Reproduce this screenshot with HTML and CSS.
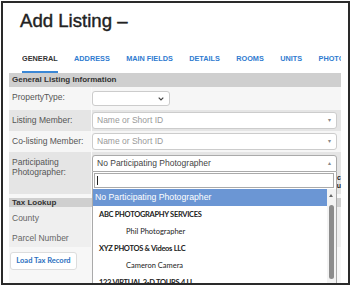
FILE: index.html
```html
<!DOCTYPE html>
<html lang="en">
<head>
    <meta charset="UTF-8">
    <meta name="viewport" content="width=device-width, initial-scale=1.0">
    <title>Add Listing</title>
    <link rel="stylesheet" href="styles.css">
</head>
<body>
    <div class="frame">
        <h1 class="title">Add Listing &ndash;</h1>

        <nav class="tabs">
            <a class="tab active">GENERAL</a>
            <a class="tab">ADDRESS</a>
            <a class="tab">MAIN FIELDS</a>
            <a class="tab">DETAILS</a>
            <a class="tab">ROOMS</a>
            <a class="tab">UNITS</a>
            <a class="tab">PHOTOS</a>
        </nav>

        <div class="panel">
            <div class="section-head">General Listing Information</div>

            <div class="row light first">
                <div class="label">PropertyType:</div>
                <div class="field">
                    <div class="select short">
                        <svg class="chevron" width="6" height="4" viewBox="0 0 6 4"><path d="M0.7 0.7 L3 3 L5.3 0.7" fill="none" stroke="#444" stroke-width="1.2"/></svg>
                    </div>
                </div>
            </div>

            <div class="row gray">
                <div class="label">Listing Member:</div>
                <div class="field">
                    <div class="select"><span class="placeholder">Name or Short ID</span><span class="arrow">&#9662;</span></div>
                </div>
            </div>

            <div class="row light">
                <div class="label">Co-listing Member:</div>
                <div class="field">
                    <div class="select"><span class="placeholder">Name or Short ID</span><span class="arrow">&#9662;</span></div>
                </div>
            </div>

            <div class="row gray tall">
                <div class="label">Participating<br>Photographer:</div>
                <div class="field">
                    <div class="combo">
                        <div class="select open"><span class="value">No Participating Photographer</span><span class="arrow">&#9652;</span></div>
                        <div class="dropdown">
                            <div class="search"><span class="cursor"></span></div>
                            <div class="results">
                                <ul class="options">
                                    <li class="option highlighted">No Participating Photographer</li>
                                    <li class="option group">ABC PHOTOGRAPHY SERVICES</li>
                                    <li class="option child">Phil Photographer</li>
                                    <li class="option group">XYZ PHOTOS &amp; Videos LLC</li>
                                    <li class="option child">Cameron Camera</li>
                                    <li class="option group">123 VIRTUAL 3-D TOURS 4 U</li>
                                </ul>
                                <div class="scrollbar">
                                    <span class="scroll-up"></span>
                                    <span class="thumb"></span>
                                </div>
                            </div>
                        </div>
                    </div>
                    <div class="peek">c<br>u</div>
                </div>
            </div>

            <div class="section-head tax">Tax Lookup</div>
            <div class="row soft">
                <div class="label">County</div>
                <div class="field"></div>
            </div>
            <div class="row soft">
                <div class="label">Parcel Number</div>
                <div class="field"></div>
            </div>
            <div class="button-row">
                <button class="load-btn">Load Tax Record</button>
            </div>
        </div>
    </div>
</body>
</html>
```

FILE: styles.css
```css
body {
    margin: 0;
    background-color: #fff;
    font-family: 'Liberation Sans', Arial, sans-serif;
    color: #333;
}
.frame {
    margin: 1px 0 0 1px;
    width: 349px;
    height: 284px;
    box-sizing: border-box;
    border: 2px solid #2a2a2a;
    overflow: hidden;
    background-color: #fff;
}
.title {
    margin: 7px 0 0 17px;
    font-size: 18.6px;
    font-weight: normal;
    line-height: 22px;
    color: #222;
    -webkit-text-stroke: 0.4px #222;
}
.tabs {
    display: flex;
    gap: 16.4px;
    width: 319px;
    overflow: hidden;
    margin: 22px 0 0 19px;
    white-space: nowrap;
}
.tab {
    font-size: 7.3px;
    font-weight: bold;
    line-height: 10px;
    color: #2f7bd0;
    padding-bottom: 7px;
    border-bottom: 2px solid transparent;
}
.tab.active {
    color: #333;
    border-bottom-color: #3a87d6;
}
.panel {
    margin-left: 6px;
    width: 332px;
    background-color: #f7f7f7;
    height: 220px;
}
.section-head {
    background-color: #cfcfcf;
    font-size: 8px;
    font-weight: bold;
    color: #333;
    line-height: 14px;
    padding-left: 3px;
}
.section-head.tax {
    margin-top: 4px;
    line-height: 9px;
}
.row {
    display: flex;
    height: 21px;
}
.row.first {
    height: 23px;
}
.row.tall {
    height: 42px;
}
.row.light {
    background-color: #f6f6f6;
}
.row.gray {
    background-color: #e5e5e5;
}
.row.soft {
    background-color: #efefef;
    height: 20px;
}
.label {
    width: 83px;
    flex-shrink: 0;
    box-sizing: border-box;
    border-right: 1px solid #fafafa;
    padding: 5px 0 0 3px;
    font-size: 8.5px;
    line-height: 10px;
    color: #555;
}
.row.soft .label {
    padding-top: 6px;
    color: #666;
}
.field {
    flex: 1;
    padding: 2px 4px 0 0;
    position: relative;
}
.row.first .field {
    padding-top: 4px;
}
.select {
    position: relative;
    box-sizing: border-box;
    height: 17px;
    background-color: #fff;
    border: 1px solid #ccc;
    border-radius: 3px;
    font-size: 8.5px;
    line-height: 15px;
    padding-left: 4px;
}
.select.short {
    width: 78px;
    height: 15px;
}
.chevron {
    position: absolute;
    right: 5px;
    top: 5px;
}
.placeholder {
    color: #999;
}
.value {
    color: #444;
}
.arrow {
    position: absolute;
    right: 5px;
    top: 0;
    font-size: 6px;
    color: #888;
}
.select.open {
    border-radius: 3px 3px 0 0;
    border-color: #aaa;
}
.combo {
    position: relative;
    margin-top: 1px;
}
.dropdown {
    position: absolute;
    top: 100%;
    left: 0;
    right: 0;
    height: 130px;
    background-color: #fff;
    border: 1px solid #aaa;
    border-top: none;
    z-index: 2;
}
.search {
    margin: 1px 2px 0 1px;
    height: 15px;
    box-sizing: border-box;
    border: 1px solid #aaa;
    position: relative;
}
.cursor {
    position: absolute;
    left: 2px;
    top: 2px;
    width: 1px;
    height: 9px;
    background-color: #222;
}
.results {
    display: flex;
    margin-top: 1px;
}
.options {
    flex: 1;
    list-style: none;
    margin: 0;
    padding: 0;
}
.option {
    height: 17px;
    line-height: 17px;
    font-family: Lato, 'Liberation Sans', sans-serif;
    font-size: 7.5px;
    color: #222;
    white-space: nowrap;
    overflow: hidden;
}
.option.highlighted {
    background-color: #6b96d4;
    color: #fff;
    font-family: 'Liberation Sans', Arial, sans-serif;
    font-size: 8.7px;
    padding-left: 2px;
}
.option.group {
    font-weight: bold;
    padding-left: 6px;
    letter-spacing: -0.3px;
}
.option.child {
    padding-left: 33px;
}
.scrollbar {
    width: 9px;
    position: relative;
    background-color: #f3f3f3;
}
.scroll-up {
    position: absolute;
    left: 2px;
    top: 5px;
    border-left: 2.5px solid transparent;
    border-right: 2.5px solid transparent;
    border-bottom: 3px solid #666;
}
.thumb {
    position: absolute;
    left: 2px;
    top: 16px;
    width: 5px;
    height: 74px;
    border-radius: 3px;
    background-color: #8c8c8c;
}
.peek {
    text-align: right;
    font-size: 7px;
    font-weight: bold;
    line-height: 8px;
    color: #222;
    margin-right: -4px;
    padding-top: 2px;
}
.button-row {
    padding: 2px 0 0 1px;
}
.load-btn {
    font-family: Lato, 'Liberation Sans', sans-serif;
    font-size: 7.5px;
    font-weight: bold;
    color: #2a6fc0;
    background-color: #fff;
    border: 1px solid #ddd;
    border-radius: 3px;
    height: 18px;
    width: 67px;
    padding: 0;
    cursor: pointer;
}
```
